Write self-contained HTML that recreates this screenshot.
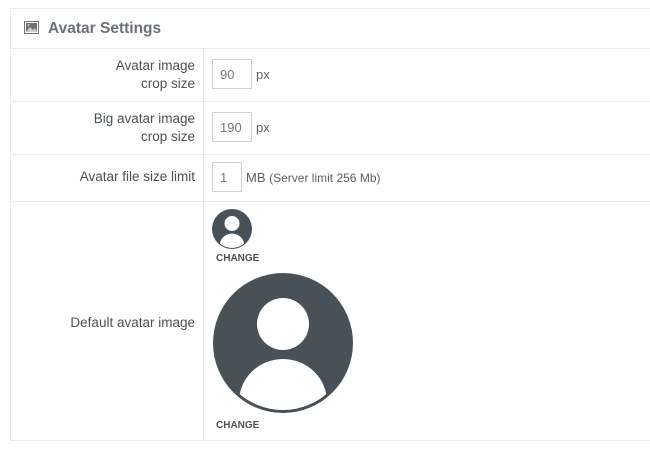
<!DOCTYPE html>
<html><head><style>
body{margin:0;background:#fff;font-family:"Liberation Sans",sans-serif;color:#555;}
.panel{position:absolute;left:10px;top:8px;width:660px;height:433px;border:1px solid #e8ecef;box-sizing:border-box;}
.hdr{position:absolute;left:0;top:0;right:0;height:39px;border-bottom:1px solid #e8ecef;}
.hdr span{position:absolute;left:37px;top:11px;font-size:15.5px;font-weight:bold;color:#6b7176;}
.row{position:absolute;left:0;right:0;border-bottom:1px solid #e8ecef;}
.lab{position:absolute;left:0;width:184px;text-align:right;font-size:13.5px;color:#4a5055;line-height:18px;}
.vline{position:absolute;left:192px;top:39px;bottom:0;border-left:1px solid #e8ecef;}
.inp{position:absolute;border:1px solid #c8d3dc;height:30px;box-sizing:border-box;font-size:13px;color:#777;padding:7px 0 0 7px;}
.u{position:absolute;font-size:13px;color:#5a6065;}
.ch{position:absolute;font-size:10px;font-weight:bold;color:#4a5055;font-family:"Liberation Sans",sans-serif;}
</style></head><body>
<div class="panel">
<div class="hdr">
<svg style="position:absolute;left:13px;top:12px" width="15" height="13" viewBox="0 0 15 13"><rect x="0.5" y="0.5" width="14" height="12" fill="#fff" stroke="#6b7176"/><rect x="2" y="2" width="11" height="9" fill="#6b7176"/><path d="M2 11 L6 6 L9 9 L11 7 L13 11Z" fill="#ccc"/><circle cx="4.5" cy="4" r="1" fill="#ccc"/></svg>
<span>Avatar Settings</span></div>
<div class="row" style="top:39px;height:53px"><div class="lab" style="top:9px">Avatar image<br>crop size</div></div>
<div class="row" style="top:92px;height:53px"><div class="lab" style="top:9px">Big avatar image<br>crop size</div></div>
<div class="row" style="top:145px;height:47px"><div class="lab" style="top:14px">Avatar file size limit</div></div>
<div class="lab" style="top:305px">Default avatar image</div>
<div class="vline"></div>
</div>
<div class="inp" style="left:212px;top:59px;width:40px">90</div><div class="u" style="left:256px;top:67px">px</div>
<div class="inp" style="left:212px;top:112px;width:40px">190</div><div class="u" style="left:256px;top:120px">px</div>
<div class="inp" style="left:212px;top:162px;width:30px">1</div><div class="u" style="left:246px;top:170px">MB <span style="font-size:12px">(Server limit 256 Mb)</span></div>
<svg style="position:absolute;left:0;top:0" width="650" height="450">
<defs><clipPath id="c1"><circle cx="283" cy="343" r="67"/></clipPath><clipPath id="c2"><circle cx="232" cy="229" r="19"/></clipPath></defs>
<circle cx="283" cy="343" r="70" fill="#485157"/>
<circle cx="283" cy="324" r="26" fill="#fff"/>
<ellipse cx="283" cy="402" rx="44" ry="43" fill="#fff" clip-path="url(#c1)"/>
<circle cx="232" cy="229" r="20" fill="#485157"/>
<circle cx="232" cy="223.5" r="7.5" fill="#fff"/>
<ellipse cx="232" cy="246" rx="12.5" ry="12.5" fill="#fff" clip-path="url(#c2)"/>
</svg>
<div class="ch" style="left:216px;top:253px">CHANGE</div>
<div class="ch" style="left:216px;top:420px">CHANGE</div>
</body></html>
